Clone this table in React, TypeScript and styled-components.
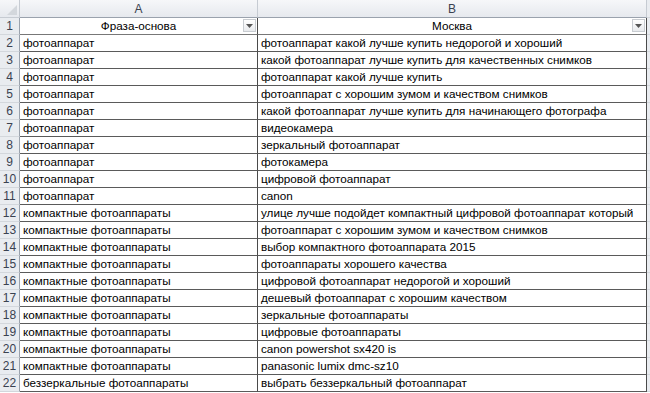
import styled, { createGlobalStyle } from 'styled-components'

const GlobalStyles = createGlobalStyle`
  html, body {
    margin: 0;
    padding: 0;
    background: #ffffff;
    overflow: hidden;
  }
  body {
    font-family: "Liberation Sans", Arial, sans-serif;
  }
`

const rows: [string, string][] = [
  ['фотоаппарат', 'фотоаппарат какой лучше купить недорогой и хороший'],
  ['фотоаппарат', 'какой фотоаппарат лучше купить для качественных снимков'],
  ['фотоаппарат', 'фотоаппарат какой лучше купить'],
  ['фотоаппарат', 'фотоаппарат с хорошим зумом и качеством снимков'],
  ['фотоаппарат', 'какой фотоаппарат лучше купить для начинающего фотографа'],
  ['фотоаппарат', 'видеокамера'],
  ['фотоаппарат', 'зеркальный фотоаппарат'],
  ['фотоаппарат', 'фотокамера'],
  ['фотоаппарат', 'цифровой фотоаппарат'],
  ['фотоаппарат', 'canon'],
  ['компактные фотоаппараты', 'улице лучше подойдет компактный цифровой фотоаппарат который'],
  ['компактные фотоаппараты', 'фотоаппарат с хорошим зумом и качеством снимков'],
  ['компактные фотоаппараты', 'выбор компактного фотоаппарата 2015'],
  ['компактные фотоаппараты', 'фотоаппараты хорошего качества'],
  ['компактные фотоаппараты', 'цифровой фотоаппарат недорогой и хороший'],
  ['компактные фотоаппараты', 'дешевый фотоаппарат с хорошим качеством'],
  ['компактные фотоаппараты', 'зеркальные фотоаппараты'],
  ['компактные фотоаппараты', 'цифровые фотоаппараты'],
  ['компактные фотоаппараты', 'canon powershot sx420 is'],
  ['компактные фотоаппараты', 'panasonic lumix dmc-sz10'],
  ['беззеркальные фотоаппараты', 'выбрать беззеркальный фотоаппарат'],
]

function FilterArrow() {
  return (
    <FilterButton>
      <svg width="7" height="4" viewBox="0 0 7 4">
        <path d="M0 0 H7 L3.5 4 Z" fill="#555" />
      </svg>
    </FilterButton>
  )
}

function App() {
  return (
    <>
      <GlobalStyles />
      <Sheet>
        <Corner>
          <svg width="10" height="10" viewBox="0 0 10 10">
            <path d="M10 0 V10 H0 Z" fill="#d3d7dc" />
          </svg>
        </Corner>
        <ColHeader>A</ColHeader>
        <ColHeader>B</ColHeader>
        <Gutter />

        <RowHeader>1</RowHeader>
        <TitleCell>
          Фраза-основа
          <FilterArrow />
        </TitleCell>
        <TitleCell>
          Москва
          <FilterArrow />
        </TitleCell>
        <Gutter />

        {rows.map(([phrase, query], i) => (
          <Row key={i}>
            <RowHeader>{i + 2}</RowHeader>
            <Cell>{phrase}</Cell>
            <Cell>{query}</Cell>
            <Gutter />
          </Row>
        ))}
      </Sheet>
    </>
  )
}

const Sheet = styled.div`
  display: grid;
  grid-template-columns: 20px 238px 389px 3px;
  grid-template-rows: 18px;
  grid-auto-rows: 17px;
  width: 650px;
  font-size: 11.7px;
  color: #000;
`

const Row = styled.div`
  display: contents;
`

const headerBg = `linear-gradient(to bottom, #f6f7f9 0%, #e6e9ee 100%)`

const Corner = styled.div`
  background: ${headerBg};
  border-right: 1px solid #c6cbd2;
  border-bottom: 1px solid #c6cbd2;
  display: flex;
  align-items: flex-end;
  justify-content: flex-end;
  padding: 0 2px 2px 0;
`

const ColHeader = styled.div`
  background: ${headerBg};
  border-right: 1px solid #c6cbd2;
  border-bottom: 1px solid #9aa2ad;
  display: flex;
  align-items: center;
  justify-content: center;
  color: #3a4250;
  font-size: 12px;
`

const Gutter = styled.div`
  background: #e9ecf0;
  border-bottom: 1px solid #d3d7dc;
`

const RowHeader = styled.div`
  background: #e9ecf0;
  border-right: 1px solid #9aa2ad;
  border-bottom: 1px solid #d3d7dc;
  display: flex;
  align-items: center;
  justify-content: center;
  color: #3a4250;
  font-size: 12px;
`

const Cell = styled.div`
  border-right: 1px solid #4a4a4a;
  border-bottom: 1px solid #5a5a5a;
  padding: 0 3px;
  line-height: 16px;
  white-space: nowrap;
  overflow: hidden;
`

const TitleCell = styled(Cell)`
  position: relative;
  text-align: center;
  border-bottom-color: #777;
`

const FilterButton = styled.span`
  position: absolute;
  right: 1px;
  top: 1px;
  width: 13px;
  height: 13px;
  box-sizing: border-box;
  border: 1px solid #c8ccd1;
  background: linear-gradient(to bottom, #ffffff, #e8eaed);
  display: flex;
  align-items: center;
  justify-content: center;
`

export default App
